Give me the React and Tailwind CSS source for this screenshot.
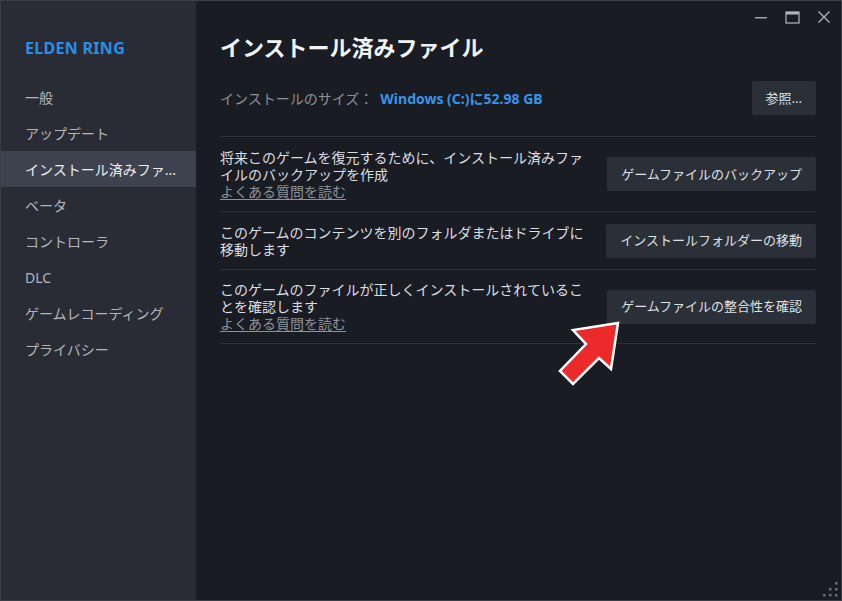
import React from "react";

const font = { fontFamily: '"Noto Sans","Noto Sans CJK JP",sans-serif' };

const items = [
  "一般",
  "アップデート",
  "インストール済みファ...",
  "ベータ",
  "コントローラ",
  "DLC",
  "ゲームレコーディング",
  "プライバシー",
];

function Btn({ children }) {
  return (
    <button className="h-[34px] px-[14px] bg-[#2b2f38] text-[#dfe2e5] text-[13px] leading-none rounded-[2px] whitespace-nowrap shrink-0">
      {children}
    </button>
  );
}

function Link() {
  return (
    <div className="text-[#8d939b] underline underline-offset-[2px] decoration-[#8d939b]">よくある質問を読む</div>
  );
}

export default function App() {
  return (
    <div
      className="relative w-[842px] h-[601px] flex bg-[#191c23] border border-[#3a3e46] overflow-hidden"
      style={font}
    >
      {/* Sidebar */}
      <div className="w-[195px] shrink-0 bg-[#2a2c35] flex flex-col pt-[37px]">
        <div className="pl-[24px] text-[16px] leading-[20px] font-bold text-[#2a8fe6] tracking-[0.3px]">
          ELDEN RING
        </div>
        <div className="mt-[21px] flex flex-col">
          {items.map((t, i) => (
            <div
              key={t}
              className={
                "h-[36px] flex items-center pl-[24px] text-[14px] " +
                (i === 2 ? "bg-[#3d424e] text-[#eceef0]" : "text-[#b3b7bd]")
              }
            >
              {t}
            </div>
          ))}
        </div>
      </div>

      {/* Main */}
      <div className="flex-1 flex flex-col pl-[24px] pr-[25px]">
        <div className="h-[32px] flex justify-end items-start pt-[8px] gap-[17px] -mr-[15px] text-[#b3b7bd]">
          <svg width="14" height="14" viewBox="0 0 14 14" className="mt-[1px]">
            <rect x="1" y="7" width="12" height="1.5" fill="#9ea3a9" />
          </svg>
          <svg width="15" height="14" viewBox="0 0 15 14" className="mt-[1px]">
            <rect x="1" y="2" width="13" height="11" fill="none" stroke="#b3b7bd" strokeWidth="1.2" />
            <rect x="1" y="2" width="13" height="2.5" fill="#b3b7bd" />
          </svg>
          <svg width="14" height="14" viewBox="0 0 14 14" className="mt-[1px]">
            <path d="M1.5 1.5 L12.5 12.5 M12.5 1.5 L1.5 12.5" stroke="#b3b7bd" strokeWidth="1.3" />
          </svg>
        </div>

        <div className="text-[22px] leading-[28px] font-bold text-[#f1f2f3]">
          インストール済みファイル
        </div>

        <div className="mt-[20px] h-[34px] flex items-center justify-between">
          <div className="text-[14px] flex items-center">
            <span className="text-[#8c9198]">インストールのサイズ：</span>
            <span className="ml-[7px] font-bold text-[#3794e8] text-[14px]">Windows (C:)に52.98 GB</span>
          </div>
          <Btn>参照...</Btn>
        </div>

        <div className="mt-[21px] border-t border-[#2d3139]" />

        <div className="flex items-center justify-between py-[11.5px] border-b border-[#2d3139] text-[14px] leading-[17px] text-[#dcdfe2]">
          <div>
            <div>将来このゲームを復元するために、インストール済みファ<br />イルのバックアップを作成</div>
            <Link />
          </div>
          <Btn>ゲームファイルのバックアップ</Btn>
        </div>

        <div className="flex items-center justify-between py-[11.5px] border-b border-[#2d3139] text-[14px] leading-[17px] text-[#dcdfe2]">
          <div>
            <div>このゲームのコンテンツを別のフォルダまたはドライブに<br />移動します</div>
          </div>
          <Btn>インストールフォルダーの移動</Btn>
        </div>

        <div className="flex items-center justify-between py-[11px] border-b border-[#2d3139] text-[14px] leading-[17px] text-[#dcdfe2]">
          <div>
            <div>このゲームのファイルが正しくインストールされているこ<br />とを確認します</div>
            <Link />
          </div>
          <Btn>ゲームファイルの整合性を確認</Btn>
        </div>
      </div>

      {/* Red arrow annotation */}
      <svg
        className="absolute left-[550px] top-[315px]"
        width="75"
        height="75"
        viewBox="0 0 75 75"
      >
        <polygon
          points="67,7 22,14 35,28 9,55 22,68 48,42 60,53"
          fill="#ec2a2c"
          stroke="#ffffff"
          strokeWidth="2.5"
          strokeLinejoin="miter"
        />
      </svg>

      {/* Resize grip */}
      <svg className="absolute right-[3px] bottom-[3px]" width="16" height="16" viewBox="0 0 16 16">
        {[
          [12, 0],
          [6, 6],
          [12, 6],
          [0, 12],
          [6, 12],
          [12, 12],
        ].map(([x, y], i) => (
          <rect key={i} x={x + 1} y={y + 1} width="2.5" height="2.5" fill="#6a6f77" />
        ))}
      </svg>
    </div>
  );
}
